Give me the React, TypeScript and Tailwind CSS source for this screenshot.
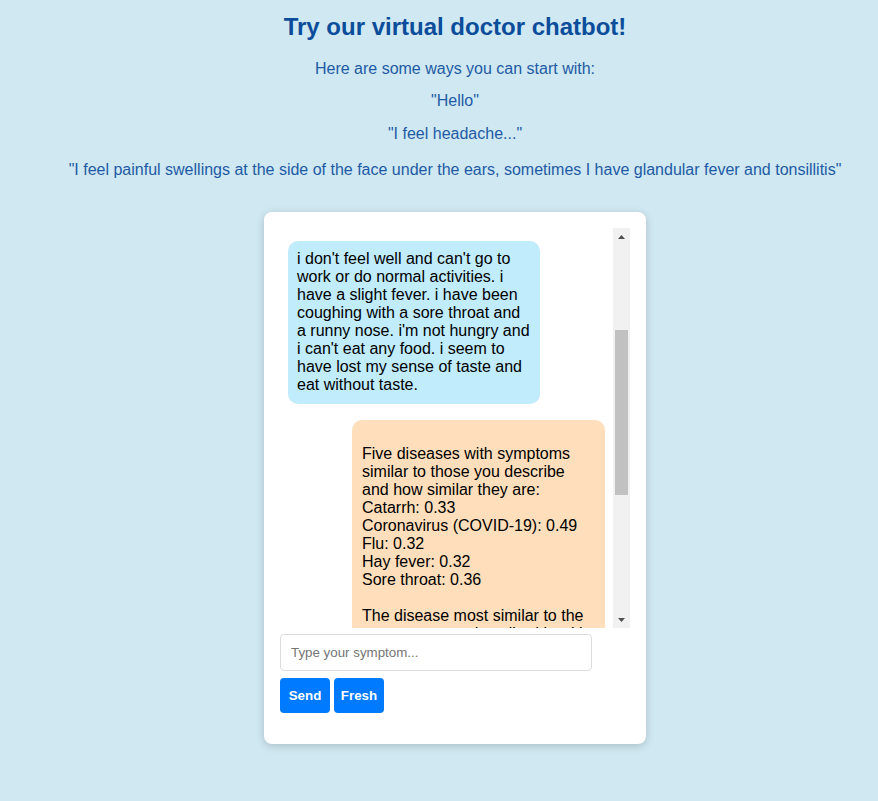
import React from 'react';

const userText =
  "i don't feel well and can't go to work or do normal activities. i have a slight fever. i have been coughing with a sore throat and a runny nose. i'm not hungry and i can't eat any food. i seem to have lost my sense of taste and eat without taste.";

const botText = `
Five diseases with symptoms similar to those you describe and how similar they are:
Catarrh: 0.33
Coronavirus (COVID-19): 0.49
Flu: 0.32
Hay fever: 0.32
Sore throat: 0.36

The disease most similar to the symptoms you described is with a similarity of 0.49: Coronavirus (COVID-19)`;

const examples = [
  'Here are some ways you can start with:',
  '"Hello"',
  '"I feel headache..."',
  '"I feel painful swellings at the side of the face under the ears, sometimes I have glandular fever and tonsillitis"',
];

function FakeScrollbar() {
  return (
    <div className="flex w-[17px] shrink-0 flex-col bg-[#f1f1f1]">
      <div className="flex h-[17px] items-center justify-center">
        <svg width="7" height="4" viewBox="0 0 7 4">
          <path d="M0 4 L3.5 0 L7 4 Z" fill="#505050" />
        </svg>
      </div>
      <div className="relative flex-1">
        <div className="absolute left-[2px] right-[2px] top-[85px] h-[165px] bg-[#c1c1c1]" />
      </div>
      <div className="flex h-[17px] items-center justify-center">
        <svg width="7" height="4" viewBox="0 0 7 4">
          <path d="M0 0 L3.5 4 L7 0 Z" fill="#505050" />
        </svg>
      </div>
    </div>
  );
}

export default function App() {
  return (
    <div className="min-h-screen bg-[#d0e8f2] pl-8 font-['Liberation_Sans',Arial,sans-serif]">
      <div className="flex flex-col items-center pt-[13px] text-center">
        <h1 className="text-[24px] font-bold leading-[28px] text-[#0c4d9b]">Try our virtual doctor chatbot!</h1>
        <p className="mt-[19px] text-[16px] leading-[18px] text-[#1e5ba4]">{examples[0]}</p>
        <p className="mt-[14px] text-[16px] leading-[18px] text-[#1e5ba4]">{examples[1]}</p>
        <p className="mt-[15px] text-[16px] leading-[18px] text-[#1e5ba4]">{examples[2]}</p>
        <p className="mt-[18px] text-[16px] leading-[18px] text-[#1e5ba4]">{examples[3]}</p>
      </div>

      <div className="mx-auto mt-[33px] w-[382px] rounded-[8px] bg-white px-4 pb-[31px] pt-4 shadow-[0_2px_8px_rgba(0,0,0,0.18)]">
        <div className="flex h-[400px]">
          <div className="flex flex-1 flex-col gap-4 overflow-hidden pt-[13px]">
            <div className="ml-2 w-[252px] shrink-0 rounded-[10px] bg-[#c0ecfc] pb-[10px] pl-[9px] pr-[8px] pt-[9px] text-[16px] leading-[18px] text-black">
              {userText}
            </div>
            <div className="ml-auto mr-2 w-[253px] shrink-0 whitespace-pre-line rounded-[10px] bg-[#ffdfbb] pb-[10px] pl-[10px] pr-[14px] pt-[7px] text-[16px] leading-[18px] text-black">
              {botText}
            </div>
          </div>
          <FakeScrollbar />
        </div>

        <input
          type="text"
          placeholder="Type your symptom..."
          className="mt-[6px] block h-[37px] w-[312px] rounded-[4px] border border-[#dddddd] px-[10px] text-[13.33px] text-black outline-none placeholder:text-[#757575]"
        />
        <div className="mt-[7px] flex gap-[4px]">
          <button className="h-[35px] w-[50px] rounded-[4px] bg-[#007bff] text-[13.33px] font-bold text-white">Send</button>
          <button className="h-[35px] w-[50px] rounded-[4px] bg-[#007bff] text-[13.33px] font-bold text-white">Fresh</button>
        </div>
      </div>
    </div>
  );
}
